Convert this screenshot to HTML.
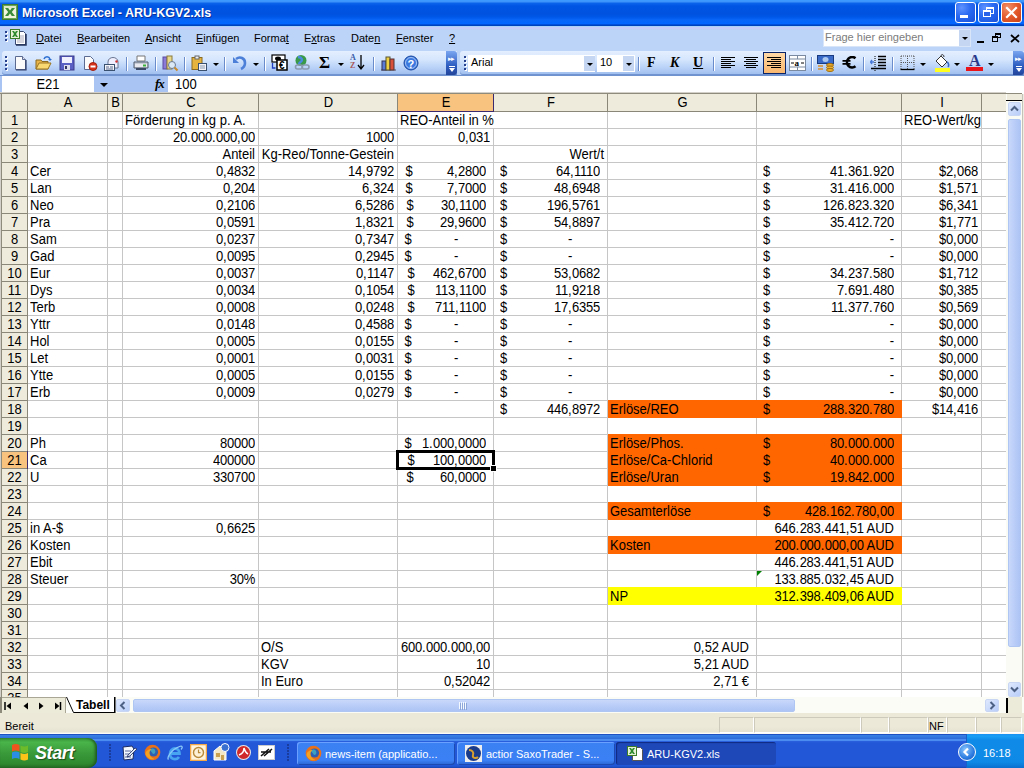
<!DOCTYPE html><html><head><meta charset="utf-8"><style>
*{margin:0;padding:0;box-sizing:border-box}
html,body{width:1024px;height:768px;overflow:hidden;background:#fff;font-family:"Liberation Sans", sans-serif}
.a{position:absolute}
.t{position:absolute;font-size:13px;line-height:17px;height:17px;white-space:nowrap;color:#000;transform-origin:0 13px;transform:scaleY(1.08)}
.n{letter-spacing:-0.23px}
.n i{font-style:normal;letter-spacing:0.39px}
.n em{font-style:normal;letter-spacing:0}
.r{text-align:right}
.c{text-align:center}
.hl{position:absolute;height:1px;background:#c6c6c6}
.vl{position:absolute;width:1px;background:#c6c6c6}
.m{position:absolute;font-size:11px;line-height:13px;white-space:nowrap;color:#000}
</style></head><body>
<div class="a" style="left:0;top:92px;width:1024px;height:605px;background:#fff"></div>
<div class="hl" style="left:28px;top:128px;width:978px"></div>
<div class="hl" style="left:28px;top:145px;width:978px"></div>
<div class="hl" style="left:28px;top:162px;width:978px"></div>
<div class="hl" style="left:28px;top:179px;width:978px"></div>
<div class="hl" style="left:28px;top:196px;width:978px"></div>
<div class="hl" style="left:28px;top:213px;width:978px"></div>
<div class="hl" style="left:28px;top:230px;width:978px"></div>
<div class="hl" style="left:28px;top:247px;width:978px"></div>
<div class="hl" style="left:28px;top:264px;width:978px"></div>
<div class="hl" style="left:28px;top:281px;width:978px"></div>
<div class="hl" style="left:28px;top:298px;width:978px"></div>
<div class="hl" style="left:28px;top:315px;width:978px"></div>
<div class="hl" style="left:28px;top:332px;width:978px"></div>
<div class="hl" style="left:28px;top:349px;width:978px"></div>
<div class="hl" style="left:28px;top:366px;width:978px"></div>
<div class="hl" style="left:28px;top:383px;width:978px"></div>
<div class="hl" style="left:28px;top:400px;width:978px"></div>
<div class="hl" style="left:28px;top:417px;width:978px"></div>
<div class="hl" style="left:28px;top:434px;width:978px"></div>
<div class="hl" style="left:28px;top:451px;width:978px"></div>
<div class="hl" style="left:28px;top:468px;width:978px"></div>
<div class="hl" style="left:28px;top:485px;width:978px"></div>
<div class="hl" style="left:28px;top:502px;width:978px"></div>
<div class="hl" style="left:28px;top:519px;width:978px"></div>
<div class="hl" style="left:28px;top:536px;width:978px"></div>
<div class="hl" style="left:28px;top:553px;width:978px"></div>
<div class="hl" style="left:28px;top:570px;width:978px"></div>
<div class="hl" style="left:28px;top:587px;width:978px"></div>
<div class="hl" style="left:28px;top:604px;width:978px"></div>
<div class="hl" style="left:28px;top:621px;width:978px"></div>
<div class="hl" style="left:28px;top:638px;width:978px"></div>
<div class="hl" style="left:28px;top:655px;width:978px"></div>
<div class="hl" style="left:28px;top:672px;width:978px"></div>
<div class="hl" style="left:28px;top:689px;width:978px"></div>
<div class="vl" style="left:107px;top:112px;height:585px"></div>
<div class="vl" style="left:122px;top:112px;height:585px"></div>
<div class="vl" style="left:258px;top:112px;height:585px"></div>
<div class="vl" style="left:397px;top:112px;height:585px"></div>
<div class="vl" style="left:493px;top:112px;height:585px"></div>
<div class="vl" style="left:607px;top:112px;height:585px"></div>
<div class="vl" style="left:756px;top:112px;height:585px"></div>
<div class="vl" style="left:901px;top:112px;height:585px"></div>
<div class="vl" style="left:981px;top:112px;height:585px"></div>
<div class="a" style="left:608px;top:400px;width:294px;height:18px;background:#ff6600"></div>
<div class="a" style="left:608px;top:434px;width:294px;height:52px;background:#ff6600"></div>
<div class="a" style="left:608px;top:502px;width:294px;height:18px;background:#ff6600"></div>
<div class="a" style="left:608px;top:536px;width:294px;height:18px;background:#ff6600"></div>
<div class="a" style="left:608px;top:587px;width:294px;height:18px;background:#ffff00"></div>
<div class="a" style="left:493px;top:112px;width:1px;height:16px;background:#fff"></div>
<div class="t" style="left:125px;top:112px">Förderung in kg p. A.</div>
<div class="t" style="left:400px;top:112px">REO-Anteil in %</div>
<div class="t" style="left:904px;top:112px">REO-Wert/kg</div>
<div class="t r" style="left:-45px;width:300px;top:129px"><span class="n">20<i>.</i>000<i>.</i>000<i>,</i>00</span></div>
<div class="t r" style="left:94px;width:300px;top:129px"><span class="n">1000</span></div>
<div class="t r" style="left:190px;width:300px;top:129px"><span class="n">0<i>,</i>031</span></div>
<div class="t r" style="left:-45px;width:300px;top:146px">Anteil</div>
<div class="t r" style="left:94px;width:300px;top:146px">Kg-Reo/Tonne-Gestein</div>
<div class="t r" style="left:304px;width:300px;top:146px">Wert/t</div>
<div class="t" style="left:30px;top:163px">Cer</div>
<div class="t r" style="left:-45px;width:300px;top:163px"><span class="n">0<i>,</i>4832</span></div>
<div class="t r" style="left:94px;width:300px;top:163px"><span class="n">14<i>,</i>9792</span></div>
<div class="t" style="left:405.5px;top:163px">$</div>
<div class="t r" style="left:186px;width:300px;top:163px"><span class="n">4<i>,</i>2800</span></div>
<div class="t" style="left:500px;top:163px">$</div>
<div class="t r" style="left:300px;width:300px;top:163px"><span class="n">64<i>,</i>1110</span></div>
<div class="t" style="left:763px;top:163px">$</div>
<div class="t r" style="left:594px;width:300px;top:163px"><span class="n">41<i>.</i>361<i>.</i>920</span></div>
<div class="t r" style="left:678px;width:300px;top:163px"><span class="n">$2<i>,</i>068</span></div>
<div class="t" style="left:30px;top:180px">Lan</div>
<div class="t r" style="left:-45px;width:300px;top:180px"><span class="n">0<i>,</i>204</span></div>
<div class="t r" style="left:94px;width:300px;top:180px"><span class="n">6<i>,</i>324</span></div>
<div class="t" style="left:405.5px;top:180px">$</div>
<div class="t r" style="left:186px;width:300px;top:180px"><span class="n">7<i>,</i>7000</span></div>
<div class="t" style="left:500px;top:180px">$</div>
<div class="t r" style="left:300px;width:300px;top:180px"><span class="n">48<i>,</i>6948</span></div>
<div class="t" style="left:763px;top:180px">$</div>
<div class="t r" style="left:594px;width:300px;top:180px"><span class="n">31<i>.</i>416<i>.</i>000</span></div>
<div class="t r" style="left:678px;width:300px;top:180px"><span class="n">$1<i>,</i>571</span></div>
<div class="t" style="left:30px;top:197px">Neo</div>
<div class="t r" style="left:-45px;width:300px;top:197px"><span class="n">0<i>,</i>2106</span></div>
<div class="t r" style="left:94px;width:300px;top:197px"><span class="n">6<i>,</i>5286</span></div>
<div class="t" style="left:406.5px;top:197px">$</div>
<div class="t r" style="left:186px;width:300px;top:197px"><span class="n">30<i>,</i>1100</span></div>
<div class="t" style="left:500px;top:197px">$</div>
<div class="t r" style="left:300px;width:300px;top:197px"><span class="n">196<i>,</i>5761</span></div>
<div class="t" style="left:763px;top:197px">$</div>
<div class="t r" style="left:594px;width:300px;top:197px"><span class="n">126<i>.</i>823<i>.</i>320</span></div>
<div class="t r" style="left:678px;width:300px;top:197px"><span class="n">$6<i>,</i>341</span></div>
<div class="t" style="left:30px;top:214px">Pra</div>
<div class="t r" style="left:-45px;width:300px;top:214px"><span class="n">0<i>,</i>0591</span></div>
<div class="t r" style="left:94px;width:300px;top:214px"><span class="n">1<i>,</i>8321</span></div>
<div class="t" style="left:406.5px;top:214px">$</div>
<div class="t r" style="left:186px;width:300px;top:214px"><span class="n">29<i>,</i>9600</span></div>
<div class="t" style="left:500px;top:214px">$</div>
<div class="t r" style="left:300px;width:300px;top:214px"><span class="n">54<i>,</i>8897</span></div>
<div class="t" style="left:763px;top:214px">$</div>
<div class="t r" style="left:594px;width:300px;top:214px"><span class="n">35<i>.</i>412<i>.</i>720</span></div>
<div class="t r" style="left:678px;width:300px;top:214px"><span class="n">$1<i>,</i>771</span></div>
<div class="t" style="left:30px;top:231px">Sam</div>
<div class="t r" style="left:-45px;width:300px;top:231px"><span class="n">0<i>,</i>0237</span></div>
<div class="t r" style="left:94px;width:300px;top:231px"><span class="n">0<i>,</i>7347</span></div>
<div class="t" style="left:404.5px;top:231px">$</div>
<div class="t" style="left:454px;top:231px">-</div>
<div class="t" style="left:500px;top:231px">$</div>
<div class="t" style="left:568px;top:231px">-</div>
<div class="t" style="left:763px;top:231px">$</div>
<div class="t r" style="left:594px;width:300px;top:231px">-</div>
<div class="t r" style="left:678px;width:300px;top:231px"><span class="n">$0<i>,</i>000</span></div>
<div class="t" style="left:30px;top:248px">Gad</div>
<div class="t r" style="left:-45px;width:300px;top:248px"><span class="n">0<i>,</i>0095</span></div>
<div class="t r" style="left:94px;width:300px;top:248px"><span class="n">0<i>,</i>2945</span></div>
<div class="t" style="left:404.5px;top:248px">$</div>
<div class="t" style="left:454px;top:248px">-</div>
<div class="t" style="left:500px;top:248px">$</div>
<div class="t" style="left:568px;top:248px">-</div>
<div class="t" style="left:763px;top:248px">$</div>
<div class="t r" style="left:594px;width:300px;top:248px">-</div>
<div class="t r" style="left:678px;width:300px;top:248px"><span class="n">$0<i>,</i>000</span></div>
<div class="t" style="left:30px;top:265px">Eur</div>
<div class="t r" style="left:-45px;width:300px;top:265px"><span class="n">0<i>,</i>0037</span></div>
<div class="t r" style="left:94px;width:300px;top:265px"><span class="n">0<i>,</i>1147</span></div>
<div class="t" style="left:407.5px;top:265px">$</div>
<div class="t r" style="left:186px;width:300px;top:265px"><span class="n">462<i>,</i>6700</span></div>
<div class="t" style="left:500px;top:265px">$</div>
<div class="t r" style="left:300px;width:300px;top:265px"><span class="n">53<i>,</i>0682</span></div>
<div class="t" style="left:763px;top:265px">$</div>
<div class="t r" style="left:594px;width:300px;top:265px"><span class="n">34<i>.</i>237<i>.</i>580</span></div>
<div class="t r" style="left:678px;width:300px;top:265px"><span class="n">$1<i>,</i>712</span></div>
<div class="t" style="left:30px;top:282px">Dys</div>
<div class="t r" style="left:-45px;width:300px;top:282px"><span class="n">0<i>,</i>0034</span></div>
<div class="t r" style="left:94px;width:300px;top:282px"><span class="n">0<i>,</i>1054</span></div>
<div class="t" style="left:407.5px;top:282px">$</div>
<div class="t r" style="left:186px;width:300px;top:282px"><span class="n">113<i>,</i>1100</span></div>
<div class="t" style="left:500px;top:282px">$</div>
<div class="t r" style="left:300px;width:300px;top:282px"><span class="n">11<i>,</i>9218</span></div>
<div class="t" style="left:763px;top:282px">$</div>
<div class="t r" style="left:594px;width:300px;top:282px"><span class="n">7<i>.</i>691<i>.</i>480</span></div>
<div class="t r" style="left:678px;width:300px;top:282px"><span class="n">$0<i>,</i>385</span></div>
<div class="t" style="left:30px;top:299px">Terb</div>
<div class="t r" style="left:-45px;width:300px;top:299px"><span class="n">0<i>,</i>0008</span></div>
<div class="t r" style="left:94px;width:300px;top:299px"><span class="n">0<i>,</i>0248</span></div>
<div class="t" style="left:407.5px;top:299px">$</div>
<div class="t r" style="left:186px;width:300px;top:299px"><span class="n">711<i>,</i>1100</span></div>
<div class="t" style="left:500px;top:299px">$</div>
<div class="t r" style="left:300px;width:300px;top:299px"><span class="n">17<i>,</i>6355</span></div>
<div class="t" style="left:763px;top:299px">$</div>
<div class="t r" style="left:594px;width:300px;top:299px"><span class="n">11<i>.</i>377<i>.</i>760</span></div>
<div class="t r" style="left:678px;width:300px;top:299px"><span class="n">$0<i>,</i>569</span></div>
<div class="t" style="left:30px;top:316px">Yttr</div>
<div class="t r" style="left:-45px;width:300px;top:316px"><span class="n">0<i>,</i>0148</span></div>
<div class="t r" style="left:94px;width:300px;top:316px"><span class="n">0<i>,</i>4588</span></div>
<div class="t" style="left:404.5px;top:316px">$</div>
<div class="t" style="left:454px;top:316px">-</div>
<div class="t" style="left:500px;top:316px">$</div>
<div class="t" style="left:568px;top:316px">-</div>
<div class="t" style="left:763px;top:316px">$</div>
<div class="t r" style="left:594px;width:300px;top:316px">-</div>
<div class="t r" style="left:678px;width:300px;top:316px"><span class="n">$0<i>,</i>000</span></div>
<div class="t" style="left:30px;top:333px">Hol</div>
<div class="t r" style="left:-45px;width:300px;top:333px"><span class="n">0<i>,</i>0005</span></div>
<div class="t r" style="left:94px;width:300px;top:333px"><span class="n">0<i>,</i>0155</span></div>
<div class="t" style="left:404.5px;top:333px">$</div>
<div class="t" style="left:454px;top:333px">-</div>
<div class="t" style="left:500px;top:333px">$</div>
<div class="t" style="left:568px;top:333px">-</div>
<div class="t" style="left:763px;top:333px">$</div>
<div class="t r" style="left:594px;width:300px;top:333px">-</div>
<div class="t r" style="left:678px;width:300px;top:333px"><span class="n">$0<i>,</i>000</span></div>
<div class="t" style="left:30px;top:350px">Let</div>
<div class="t r" style="left:-45px;width:300px;top:350px"><span class="n">0<i>,</i>0001</span></div>
<div class="t r" style="left:94px;width:300px;top:350px"><span class="n">0<i>,</i>0031</span></div>
<div class="t" style="left:404.5px;top:350px">$</div>
<div class="t" style="left:454px;top:350px">-</div>
<div class="t" style="left:500px;top:350px">$</div>
<div class="t" style="left:568px;top:350px">-</div>
<div class="t" style="left:763px;top:350px">$</div>
<div class="t r" style="left:594px;width:300px;top:350px">-</div>
<div class="t r" style="left:678px;width:300px;top:350px"><span class="n">$0<i>,</i>000</span></div>
<div class="t" style="left:30px;top:367px">Ytte</div>
<div class="t r" style="left:-45px;width:300px;top:367px"><span class="n">0<i>,</i>0005</span></div>
<div class="t r" style="left:94px;width:300px;top:367px"><span class="n">0<i>,</i>0155</span></div>
<div class="t" style="left:404.5px;top:367px">$</div>
<div class="t" style="left:454px;top:367px">-</div>
<div class="t" style="left:500px;top:367px">$</div>
<div class="t" style="left:568px;top:367px">-</div>
<div class="t" style="left:763px;top:367px">$</div>
<div class="t r" style="left:594px;width:300px;top:367px">-</div>
<div class="t r" style="left:678px;width:300px;top:367px"><span class="n">$0<i>,</i>000</span></div>
<div class="t" style="left:30px;top:384px">Erb</div>
<div class="t r" style="left:-45px;width:300px;top:384px"><span class="n">0<i>,</i>0009</span></div>
<div class="t r" style="left:94px;width:300px;top:384px"><span class="n">0<i>,</i>0279</span></div>
<div class="t" style="left:404.5px;top:384px">$</div>
<div class="t" style="left:454px;top:384px">-</div>
<div class="t" style="left:500px;top:384px">$</div>
<div class="t" style="left:568px;top:384px">-</div>
<div class="t" style="left:763px;top:384px">$</div>
<div class="t r" style="left:594px;width:300px;top:384px">-</div>
<div class="t r" style="left:678px;width:300px;top:384px"><span class="n">$0<i>,</i>000</span></div>
<div class="t" style="left:500px;top:401px">$</div>
<div class="t r" style="left:300px;width:300px;top:401px"><span class="n">446<i>,</i>8972</span></div>
<div class="t" style="left:610px;top:401px">Erlöse/REO</div>
<div class="t" style="left:763px;top:401px">$</div>
<div class="t r" style="left:594px;width:300px;top:401px"><span class="n">288<i>.</i>320<i>.</i>780</span></div>
<div class="t r" style="left:678px;width:300px;top:401px"><span class="n">$14<i>,</i>416</span></div>
<div class="t" style="left:30px;top:435px">Ph</div>
<div class="t r" style="left:-45px;width:300px;top:435px"><span class="n">80000</span></div>
<div class="t" style="left:404.5px;top:435px">$</div>
<div class="t r" style="left:186px;width:300px;top:435px"><span class="n">1<i>.</i>000<i>,</i>0000</span></div>
<div class="t" style="left:610px;top:435px">Erlöse/Phos.</div>
<div class="t" style="left:763px;top:435px">$</div>
<div class="t r" style="left:594px;width:300px;top:435px"><span class="n">80<i>.</i>000<i>.</i>000</span></div>
<div class="t" style="left:30px;top:452px">Ca</div>
<div class="t r" style="left:-45px;width:300px;top:452px"><span class="n">400000</span></div>
<div class="t" style="left:407.5px;top:452px">$</div>
<div class="t r" style="left:186px;width:300px;top:452px"><span class="n">100<i>,</i>0000</span></div>
<div class="t" style="left:610px;top:452px">Erlöse/Ca-Chlorid</div>
<div class="t" style="left:763px;top:452px">$</div>
<div class="t r" style="left:594px;width:300px;top:452px"><span class="n">40<i>.</i>000<i>.</i>000</span></div>
<div class="t" style="left:30px;top:469px">U</div>
<div class="t r" style="left:-45px;width:300px;top:469px"><span class="n">330700</span></div>
<div class="t" style="left:406.5px;top:469px">$</div>
<div class="t r" style="left:186px;width:300px;top:469px"><span class="n">60<i>,</i>0000</span></div>
<div class="t" style="left:610px;top:469px">Erlöse/Uran</div>
<div class="t" style="left:763px;top:469px">$</div>
<div class="t r" style="left:594px;width:300px;top:469px"><span class="n">19<i>.</i>842<i>.</i>000</span></div>
<div class="t" style="left:610px;top:503px">Gesamterlöse</div>
<div class="t" style="left:763px;top:503px">$</div>
<div class="t r" style="left:594px;width:300px;top:503px"><span class="n">428<i>.</i>162<i>.</i>780<i>,</i>00</span></div>
<div class="t" style="left:30px;top:520px">in A-$</div>
<div class="t r" style="left:-45px;width:300px;top:520px"><span class="n">0<i>,</i>6625</span></div>
<div class="t r" style="left:594px;width:300px;top:520px"><span class="n">646<i>.</i>283<i>.</i>441<i>,</i>51<em> AUD</em></span></div>
<div class="t" style="left:30px;top:537px">Kosten</div>
<div class="t" style="left:610px;top:537px">Kosten</div>
<div class="t r" style="left:594px;width:300px;top:537px"><span class="n">200<i>.</i>000<i>.</i>000<i>,</i>00<em> AUD</em></span></div>
<div class="t" style="left:30px;top:554px">Ebit</div>
<div class="t r" style="left:594px;width:300px;top:554px"><span class="n">446<i>.</i>283<i>.</i>441<i>,</i>51<em> AUD</em></span></div>
<div class="t" style="left:30px;top:571px">Steuer</div>
<div class="t r" style="left:-45px;width:300px;top:571px"><span class="n">30%</span></div>
<div class="t r" style="left:594px;width:300px;top:571px"><span class="n">133<i>.</i>885<i>.</i>032<i>,</i>45<em> AUD</em></span></div>
<div class="t" style="left:610px;top:588px">NP</div>
<div class="t r" style="left:594px;width:300px;top:588px"><span class="n">312<i>.</i>398<i>.</i>409<i>,</i>06<em> AUD</em></span></div>
<div class="t" style="left:261px;top:639px">O/S</div>
<div class="t r" style="left:190px;width:300px;top:639px"><span class="n">600<i>.</i>000<i>.</i>000<i>,</i>00</span></div>
<div class="t r" style="left:449px;width:300px;top:639px"><span class="n">0<i>,</i>52<em> AUD</em></span></div>
<div class="t" style="left:261px;top:656px">KGV</div>
<div class="t r" style="left:190px;width:300px;top:656px"><span class="n">10</span></div>
<div class="t r" style="left:449px;width:300px;top:656px"><span class="n">5<i>,</i>21<em> AUD</em></span></div>
<div class="t" style="left:261px;top:673px">In Euro</div>
<div class="t r" style="left:190px;width:300px;top:673px"><span class="n">0<i>,</i>52042</span></div>
<div class="t r" style="left:449px;width:300px;top:673px"><span class="n">2<i>,</i>71<em> €</em></span></div>
<svg class="a" style="left:757px;top:571px" width="6" height="6"><path d="M0 0H5L0 5Z" fill="#008000"/></svg>
<div class="a" style="left:396px;top:450px;width:99px;height:20px;border:3px solid #000"></div>
<div class="a" style="left:490px;top:465px;width:7px;height:7px;background:#000;border:1px solid #fff"></div>
<div class="a" style="left:0;top:92px;width:1006px;height:1px;background:#d2d0c8"></div>
<div class="a" style="left:0;top:93px;width:1006px;height:1px;background:#8e8b7c"></div>
<div class="a" style="left:1px;top:94px;width:1005px;height:17px;background:#eeebdd"></div>
<div class="a" style="left:1px;top:111px;width:1005px;height:1px;background:#8a8778"></div>
<div class="a" style="left:0;top:94px;width:1px;height:603px;background:#d2d0c8"></div>
<div class="a" style="left:1px;top:94px;width:1px;height:603px;background:#8e8b7c"></div>
<div class="a" style="left:2px;top:112px;width:25px;height:585px;background:#eeebdd"></div>
<div class="a" style="left:27px;top:94px;width:1px;height:603px;background:#8a8778"></div>
<div class="a" style="left:28px;top:94px;width:79px;height:17px;background:#eeebdd"></div>
<div class="a" style="left:107px;top:94px;width:1px;height:17px;background:#8a8778"></div>
<div class="t c" style="left:28px;width:80px;top:94px">A</div>
<div class="a" style="left:108px;top:94px;width:14px;height:17px;background:#eeebdd"></div>
<div class="a" style="left:122px;top:94px;width:1px;height:17px;background:#8a8778"></div>
<div class="t c" style="left:108px;width:15px;top:94px">B</div>
<div class="a" style="left:123px;top:94px;width:135px;height:17px;background:#eeebdd"></div>
<div class="a" style="left:258px;top:94px;width:1px;height:17px;background:#8a8778"></div>
<div class="t c" style="left:123px;width:136px;top:94px">C</div>
<div class="a" style="left:259px;top:94px;width:138px;height:17px;background:#eeebdd"></div>
<div class="a" style="left:397px;top:94px;width:1px;height:17px;background:#8a8778"></div>
<div class="t c" style="left:259px;width:139px;top:94px">D</div>
<div class="a" style="left:398px;top:94px;width:95px;height:17px;background:#f8c37e"></div>
<div class="a" style="left:493px;top:94px;width:1px;height:17px;background:#8a8778"></div>
<div class="t c" style="left:398px;width:96px;top:94px">E</div>
<div class="a" style="left:494px;top:94px;width:113px;height:17px;background:#eeebdd"></div>
<div class="a" style="left:607px;top:94px;width:1px;height:17px;background:#8a8778"></div>
<div class="t c" style="left:494px;width:114px;top:94px">F</div>
<div class="a" style="left:608px;top:94px;width:148px;height:17px;background:#eeebdd"></div>
<div class="a" style="left:756px;top:94px;width:1px;height:17px;background:#8a8778"></div>
<div class="t c" style="left:608px;width:149px;top:94px">G</div>
<div class="a" style="left:757px;top:94px;width:144px;height:17px;background:#eeebdd"></div>
<div class="a" style="left:901px;top:94px;width:1px;height:17px;background:#8a8778"></div>
<div class="t c" style="left:757px;width:145px;top:94px">H</div>
<div class="a" style="left:902px;top:94px;width:79px;height:17px;background:#eeebdd"></div>
<div class="a" style="left:981px;top:94px;width:1px;height:17px;background:#8a8778"></div>
<div class="t c" style="left:902px;width:80px;top:94px">I</div>
<div class="a" style="left:982px;top:94px;width:24px;height:17px;background:#eeebdd"></div>
<div class="a" style="left:397px;top:111px;width:97px;height:1px;background:#3c2a6e"></div>
<div class="a" style="left:493px;top:94px;width:1px;height:17px;background:#3c2a6e"></div>
<div class="a" style="left:2px;top:128px;width:25px;height:1px;background:#8a8778"></div>
<div class="t c" style="left:2px;width:25px;top:112px">1</div>
<div class="a" style="left:2px;top:145px;width:25px;height:1px;background:#8a8778"></div>
<div class="t c" style="left:2px;width:25px;top:129px">2</div>
<div class="a" style="left:2px;top:162px;width:25px;height:1px;background:#8a8778"></div>
<div class="t c" style="left:2px;width:25px;top:146px">3</div>
<div class="a" style="left:2px;top:179px;width:25px;height:1px;background:#8a8778"></div>
<div class="t c" style="left:2px;width:25px;top:163px">4</div>
<div class="a" style="left:2px;top:196px;width:25px;height:1px;background:#8a8778"></div>
<div class="t c" style="left:2px;width:25px;top:180px">5</div>
<div class="a" style="left:2px;top:213px;width:25px;height:1px;background:#8a8778"></div>
<div class="t c" style="left:2px;width:25px;top:197px">6</div>
<div class="a" style="left:2px;top:230px;width:25px;height:1px;background:#8a8778"></div>
<div class="t c" style="left:2px;width:25px;top:214px">7</div>
<div class="a" style="left:2px;top:247px;width:25px;height:1px;background:#8a8778"></div>
<div class="t c" style="left:2px;width:25px;top:231px">8</div>
<div class="a" style="left:2px;top:264px;width:25px;height:1px;background:#8a8778"></div>
<div class="t c" style="left:2px;width:25px;top:248px">9</div>
<div class="a" style="left:2px;top:281px;width:25px;height:1px;background:#8a8778"></div>
<div class="t c" style="left:2px;width:25px;top:265px">10</div>
<div class="a" style="left:2px;top:298px;width:25px;height:1px;background:#8a8778"></div>
<div class="t c" style="left:2px;width:25px;top:282px">11</div>
<div class="a" style="left:2px;top:315px;width:25px;height:1px;background:#8a8778"></div>
<div class="t c" style="left:2px;width:25px;top:299px">12</div>
<div class="a" style="left:2px;top:332px;width:25px;height:1px;background:#8a8778"></div>
<div class="t c" style="left:2px;width:25px;top:316px">13</div>
<div class="a" style="left:2px;top:349px;width:25px;height:1px;background:#8a8778"></div>
<div class="t c" style="left:2px;width:25px;top:333px">14</div>
<div class="a" style="left:2px;top:366px;width:25px;height:1px;background:#8a8778"></div>
<div class="t c" style="left:2px;width:25px;top:350px">15</div>
<div class="a" style="left:2px;top:383px;width:25px;height:1px;background:#8a8778"></div>
<div class="t c" style="left:2px;width:25px;top:367px">16</div>
<div class="a" style="left:2px;top:400px;width:25px;height:1px;background:#8a8778"></div>
<div class="t c" style="left:2px;width:25px;top:384px">17</div>
<div class="a" style="left:2px;top:417px;width:25px;height:1px;background:#8a8778"></div>
<div class="t c" style="left:2px;width:25px;top:401px">18</div>
<div class="a" style="left:2px;top:434px;width:25px;height:1px;background:#8a8778"></div>
<div class="t c" style="left:2px;width:25px;top:418px">19</div>
<div class="a" style="left:2px;top:451px;width:25px;height:1px;background:#8a8778"></div>
<div class="t c" style="left:2px;width:25px;top:435px">20</div>
<div class="a" style="left:2px;top:452px;width:25px;height:16px;background:#f8c37e"></div>
<div class="a" style="left:27px;top:451px;width:1px;height:18px;background:#3c2a6e"></div>
<div class="a" style="left:2px;top:468px;width:25px;height:1px;background:#8a8778"></div>
<div class="t c" style="left:2px;width:25px;top:452px">21</div>
<div class="a" style="left:2px;top:485px;width:25px;height:1px;background:#8a8778"></div>
<div class="t c" style="left:2px;width:25px;top:469px">22</div>
<div class="a" style="left:2px;top:502px;width:25px;height:1px;background:#8a8778"></div>
<div class="t c" style="left:2px;width:25px;top:486px">23</div>
<div class="a" style="left:2px;top:519px;width:25px;height:1px;background:#8a8778"></div>
<div class="t c" style="left:2px;width:25px;top:503px">24</div>
<div class="a" style="left:2px;top:536px;width:25px;height:1px;background:#8a8778"></div>
<div class="t c" style="left:2px;width:25px;top:520px">25</div>
<div class="a" style="left:2px;top:553px;width:25px;height:1px;background:#8a8778"></div>
<div class="t c" style="left:2px;width:25px;top:537px">26</div>
<div class="a" style="left:2px;top:570px;width:25px;height:1px;background:#8a8778"></div>
<div class="t c" style="left:2px;width:25px;top:554px">27</div>
<div class="a" style="left:2px;top:587px;width:25px;height:1px;background:#8a8778"></div>
<div class="t c" style="left:2px;width:25px;top:571px">28</div>
<div class="a" style="left:2px;top:604px;width:25px;height:1px;background:#8a8778"></div>
<div class="t c" style="left:2px;width:25px;top:588px">29</div>
<div class="a" style="left:2px;top:621px;width:25px;height:1px;background:#8a8778"></div>
<div class="t c" style="left:2px;width:25px;top:605px">30</div>
<div class="a" style="left:2px;top:638px;width:25px;height:1px;background:#8a8778"></div>
<div class="t c" style="left:2px;width:25px;top:622px">31</div>
<div class="a" style="left:2px;top:655px;width:25px;height:1px;background:#8a8778"></div>
<div class="t c" style="left:2px;width:25px;top:639px">32</div>
<div class="a" style="left:2px;top:672px;width:25px;height:1px;background:#8a8778"></div>
<div class="t c" style="left:2px;width:25px;top:656px">33</div>
<div class="a" style="left:2px;top:689px;width:25px;height:1px;background:#8a8778"></div>
<div class="t c" style="left:2px;width:25px;top:673px">34</div>
<div class="t c" style="left:2px;width:25px;top:690px">35</div>
<!-- ===== title bar ===== -->
<div class="a" style="left:0;top:0;width:1024px;height:26px;background:linear-gradient(#3d9bff 0px,#3d95fb 1.5px,#0b62ea 3.5px,#0055e3 6px,#0052df 14px,#0058e8 17px,#0866f8 20px,#0466ff 23.5px,#0050dc 24.5px,#003aae 26px)"></div>
<svg class="a" style="left:2px;top:4px" width="16" height="16" viewBox="0 0 16 16">
 <rect x="0.5" y="0.5" width="15" height="15" fill="#6aa858" stroke="#3f7a35"/>
 <rect x="2" y="2" width="12" height="12" fill="#f2f4dc"/>
 <rect x="2" y="2" width="12" height="2" fill="#dfe8c8"/>
 <path d="M3 4h3.2l1.8 2.4 1.8-2.4H13L9.8 8 13 12H9.8L8 9.6 6.2 12H3l3.2-4z" fill="#3c8c3a"/>
</svg>
<div class="a" style="left:22px;top:5px;font-size:12.5px;font-weight:bold;color:#fff;line-height:16px;text-shadow:1px 1px 0 #0a2f9c">Microsoft Excel - ARU-KGV2.xls</div>
<!-- title buttons -->
<div class="a" style="left:955px;top:2px;width:21px;height:21px;border:1px solid #fff;border-radius:3px;background:radial-gradient(circle at 30% 25%,#5f93ff 0%,#2a6af2 45%,#1b50d8 100%)"></div>
<div class="a" style="left:960px;top:15px;width:8px;height:3px;background:#fff"></div>
<div class="a" style="left:978px;top:2px;width:21px;height:21px;border:1px solid #fff;border-radius:3px;background:radial-gradient(circle at 30% 25%,#5f93ff 0%,#2a6af2 45%,#1b50d8 100%)"></div>
<div class="a" style="left:986px;top:7px;width:8px;height:7px;border:1px solid #fff;border-top-width:2px"></div>
<div class="a" style="left:983px;top:10px;width:8px;height:7px;border:1px solid #fff;border-top-width:2px;background:#2a62ea"></div>
<div class="a" style="left:1001px;top:2px;width:21px;height:21px;border:1px solid #fff;border-radius:3px;background:radial-gradient(circle at 30% 25%,#f0906a 0%,#e35a2c 50%,#c8401a 100%)"></div>
<svg class="a" style="left:1001px;top:2px" width="21" height="21"><path d="M6 6L15 15M15 6L6 15" stroke="#fff" stroke-width="2.2" stroke-linecap="square"/></svg>

<!-- ===== menu bar ===== -->
<div class="a" style="left:0;top:26px;width:1024px;height:50px;background:#bcd4f8"></div>
<div class="a" style="left:0;top:26px;width:1024px;height:4px;background:linear-gradient(#acd2f8 0px,#acd2f8 1px,#c6cdf9 1px,#c6cdf9 3px,#b4d6f2 4px)"></div>
<!-- grip -->
<div class="a" style="left:5px;top:31px;width:2px;height:2px;background:#27418f;box-shadow:0 4px 0 #27418f,0 8px 0 #27418f,1px 1px 0 #fff,1px 5px 0 #fff,1px 9px 0 #fff"></div>
<!-- excel doc icon -->
<svg class="a" style="left:10px;top:29px" width="18" height="17" viewBox="0 0 18 17">
 <path d="M5.5 2.5h8l2 2v11h-10z" fill="#fff" stroke="#3a4c74"/>
 <path d="M7 7h7M7 9h7M7 11h7M7 13h7" stroke="#aab" stroke-width="1"/>
 <rect x="0.5" y="0.5" width="9" height="9" fill="#e8f2d8" stroke="#3d7d2a"/>
 <path d="M2 2h2l1 1.5 1-1.5h2l-2 3 2 3h-2l-1-1.5-1 1.5h-2l2-3z" fill="#2f8a2f"/>
 <path d="M6 16h10v-11" stroke="#25335a" stroke-width="1.5" fill="none"/>
</svg>
<div class="m" style="left:36px;top:32px"><u>D</u>atei</div>
<div class="m" style="left:77px;top:32px"><u>B</u>earbeiten</div>
<div class="m" style="left:145px;top:32px"><u>A</u>nsicht</div>
<div class="m" style="left:196px;top:32px"><u>E</u>infügen</div>
<div class="m" style="left:254px;top:32px">Forma<u>t</u></div>
<div class="m" style="left:304px;top:32px">E<u>x</u>tras</div>
<div class="m" style="left:351px;top:32px">Date<u>n</u></div>
<div class="m" style="left:396px;top:32px"><u>F</u>enster</div>
<div class="m" style="left:449px;top:32px"><u>?</u></div>
<!-- help box -->
<div class="a" style="left:823px;top:29px;width:148px;height:18px;background:#fff;border:1px solid #d8e5f8"></div>
<div class="a" style="left:959px;top:30px;width:11px;height:16px;background:#c5d6f3"></div>
<div class="a" style="left:962px;top:37px;width:0;height:0;border-left:3px solid transparent;border-right:3px solid transparent;border-top:3px solid #000"></div>
<div class="m" style="left:825px;top:31px;color:#7c7c7c">Frage hier eingeben</div>
<div class="a" style="left:977px;top:41px;width:7px;height:2px;background:#000"></div>
<div class="a" style="left:995px;top:33px;width:6px;height:5px;border:1px solid #000;border-top-width:2px"></div>
<div class="a" style="left:992px;top:36px;width:6px;height:6px;border:1px solid #000;border-top-width:2px;background:#c6d9f7"></div>
<svg class="a" style="left:1010px;top:34px" width="10" height="9"><path d="M1 1L9 8M9 1L1 8" stroke="#000" stroke-width="1.8"/></svg>

<!-- ===== toolbars ===== -->
<div class="a" style="left:2px;top:51px;width:455px;height:24px;border-radius:3px 0 0 3px;background:linear-gradient(#e4efff 0%,#d6e6fd 35%,#bcd4f8 65%,#9ebdee 100%);box-shadow:inset 0 -1px 0 #7193cf"></div>
<div class="a" style="left:446px;top:51px;width:11px;height:24px;border-radius:0 3px 3px 0;background:linear-gradient(#7aa6f0,#2f5fc2 60%,#23449a)"></div>
<div class="a" style="left:448px;top:55px;font-size:7px;line-height:7px;color:#fff;letter-spacing:-1px">▸▸</div>
<div class="a" style="left:449px;top:66px;width:6px;height:1px;background:#fff"></div>
<div class="a" style="left:449px;top:68px;width:0;height:0;border-left:3px solid transparent;border-right:3px solid transparent;border-top:4px solid #fff"></div>
<div class="a" style="left:460px;top:51px;width:564px;height:24px;border-radius:3px 0 0 3px;background:linear-gradient(#e4efff 0%,#d6e6fd 35%,#bcd4f8 65%,#9ebdee 100%);box-shadow:inset 0 -1px 0 #7193cf"></div>
<div class="a" style="left:1013px;top:51px;width:11px;height:24px;border-radius:0 3px 3px 0;background:linear-gradient(#7aa6f0,#2f5fc2 60%,#23449a)"></div>
<div class="a" style="left:1015px;top:55px;font-size:7px;line-height:7px;color:#fff;letter-spacing:-1px">▸▸</div>
<div class="a" style="left:1016px;top:66px;width:6px;height:1px;background:#fff"></div>
<div class="a" style="left:1016px;top:68px;width:0;height:0;border-left:3px solid transparent;border-right:3px solid transparent;border-top:4px solid #fff"></div>
<!-- grips -->
<div class="a" style="left:5px;top:56px;width:2px;height:2px;background:#27418f;box-shadow:0 4px 0 #27418f,0 8px 0 #27418f,0 12px 0 #27418f,1px 1px 0 #fff,1px 5px 0 #fff,1px 9px 0 #fff,1px 13px 0 #fff"></div>
<div class="a" style="left:464px;top:56px;width:2px;height:2px;background:#27418f;box-shadow:0 4px 0 #27418f,0 8px 0 #27418f,0 12px 0 #27418f,1px 1px 0 #fff,1px 5px 0 #fff,1px 9px 0 #fff,1px 13px 0 #fff"></div>
<!-- separators -->
<div class="a" style="left:126px;top:57px;width:1px;height:14px;background:#6a8ccb;box-shadow:1px 0 0 #fff"></div>
<div class="a" style="left:155px;top:57px;width:1px;height:14px;background:#6a8ccb;box-shadow:1px 0 0 #fff"></div>
<div class="a" style="left:184px;top:57px;width:1px;height:14px;background:#6a8ccb;box-shadow:1px 0 0 #fff"></div>
<div class="a" style="left:224px;top:57px;width:1px;height:14px;background:#6a8ccb;box-shadow:1px 0 0 #fff"></div>
<div class="a" style="left:264px;top:57px;width:1px;height:14px;background:#6a8ccb;box-shadow:1px 0 0 #fff"></div>
<div class="a" style="left:373px;top:57px;width:1px;height:14px;background:#6a8ccb;box-shadow:1px 0 0 #fff"></div>
<div class="a" style="left:638px;top:57px;width:1px;height:14px;background:#6a8ccb;box-shadow:1px 0 0 #fff"></div>
<div class="a" style="left:713px;top:57px;width:1px;height:14px;background:#6a8ccb;box-shadow:1px 0 0 #fff"></div>
<div class="a" style="left:811px;top:57px;width:1px;height:14px;background:#6a8ccb;box-shadow:1px 0 0 #fff"></div>
<div class="a" style="left:863px;top:57px;width:1px;height:14px;background:#6a8ccb;box-shadow:1px 0 0 #fff"></div>
<div class="a" style="left:892px;top:57px;width:1px;height:14px;background:#6a8ccb;box-shadow:1px 0 0 #fff"></div>
<!-- new -->
<svg class="a" style="left:13px;top:55px" width="16" height="16"><path d="M2.5 1.5h7l3 3v10h-10z" fill="#fbfbfb" stroke="#5a6a90"/><path d="M9.5 1.5v3h3" fill="#dde" stroke="#5a6a90"/><path d="M3 15h10V5" stroke="#2d3c66" stroke-width="1.2" fill="none"/></svg>
<!-- open -->
<svg class="a" style="left:35px;top:55px" width="17" height="16"><path d="M1 5h5l1 1.5h6V14H1z" fill="#e9b54a" stroke="#8a6a20"/><path d="M1 14l3-6h12l-3 6z" fill="#f9d872" stroke="#9a7424"/><path d="M9 4c1-3 5-3 6 0" stroke="#2d6fd0" stroke-width="1.5" fill="none"/><path d="M13 4h4l-2 2z" fill="#2d6fd0"/></svg>
<!-- save -->
<svg class="a" style="left:59px;top:55px" width="16" height="16"><rect x="1" y="1" width="14" height="14" fill="#5a5fc4" stroke="#3a3a8a"/><rect x="3" y="2" width="10" height="6" fill="#f0f0ff"/><rect x="5" y="10" width="6" height="5" fill="#dde"/><rect x="6" y="11" width="2" height="3" fill="#336"/></svg>
<!-- permission -->
<svg class="a" style="left:82px;top:55px" width="16" height="16"><path d="M2.5 1.5h6l3 3v10h-9z" fill="#fbfbfb" stroke="#5a6a90"/><circle cx="11" cy="11.5" r="4" fill="#d8311a" stroke="#a02010"/><rect x="8.5" y="10.5" width="5" height="2" fill="#fff"/></svg>
<!-- email -->
<svg class="a" style="left:104px;top:55px" width="17" height="17"><path d="M4 7c0-6 10-6 10 0v6H4z" fill="#eef" stroke="#6b7690"/><circle cx="12.5" cy="6.5" r="1.2" fill="#c33"/><rect x="0.5" y="9.5" width="10" height="6" fill="#f4f4f8" stroke="#39506e"/><path d="M2 12h3M6 12h3M2 14h7" stroke="#5a6a90"/></svg>
<!-- print -->
<svg class="a" style="left:133px;top:55px" width="16" height="16"><path d="M4 1h8v5H4z" fill="#fff" stroke="#777"/><path d="M1 7h14v6H1z" fill="#c9ced6" stroke="#4f5a6e"/><rect x="2" y="9" width="12" height="3" fill="#e8eaf0"/><rect x="10" y="9.5" width="3" height="2" fill="#3cb13c"/><path d="M3 13h10v2H3z" fill="#3a4a66"/></svg>
<!-- research -->
<svg class="a" style="left:162px;top:55px" width="17" height="17"><rect x="1" y="2" width="4" height="12" fill="#8b7ad8" stroke="#5a4aa0"/><rect x="5" y="1" width="5" height="13" fill="#e9d98b" stroke="#8a7a3a"/><circle cx="10" cy="10" r="3.5" fill="#dbe8f5" stroke="#6a7a90"/><path d="M12.5 12.5l3 3" stroke="#c88a2a" stroke-width="2"/></svg>
<!-- paste -->
<svg class="a" style="left:191px;top:55px" width="17" height="17"><rect x="1" y="2.5" width="10" height="12" fill="#e6b43c" stroke="#8a6a20"/><rect x="4" y="1" width="4" height="3" fill="#eee" stroke="#666"/><rect x="7.5" y="8.5" width="8" height="7" fill="#f4f4f8" stroke="#39506e"/><path d="M9 11h5M9 13h5" stroke="#8a9ab0"/></svg>
<div class="a" style="left:213px;top:63px;width:0;height:0;border-left:3px solid transparent;border-right:3px solid transparent;border-top:3px solid #000"></div>
<!-- undo -->
<svg class="a" style="left:232px;top:55px" width="15" height="16"><path d="M4 4c4-3 9-1 9 4 0 3-2 5-4 6" stroke="#4b7fd8" stroke-width="2.6" fill="none"/><path d="M1 2v6h6z" fill="#4b7fd8"/></svg>
<div class="a" style="left:253px;top:63px;width:0;height:0;border-left:3px solid transparent;border-right:3px solid transparent;border-top:3px solid #000"></div>
<!-- euro convert -->
<svg class="a" style="left:271px;top:54px" width="17" height="17"><rect x="1" y="1" width="13" height="7" fill="#fff" stroke="#000" stroke-width="1.2"/><ellipse cx="7" cy="4.5" rx="3" ry="2" fill="#000"/><rect x="6" y="6" width="10" height="10" fill="#fff" stroke="#000" stroke-width="1.5"/><text x="8" y="14.5" font-family="Liberation Sans" font-weight="bold" font-size="10" fill="#000">€</text><path d="M1.5 9v5h3" stroke="#2040c0" stroke-width="1.3" fill="none"/></svg>
<!-- hyperlink -->
<svg class="a" style="left:294px;top:54px" width="17" height="17"><circle cx="7" cy="6.5" r="5.5" fill="#3a9a4a"/><path d="M4 3c2 0 4 1 4 3s-3 2-3 4" stroke="#4a8ae0" stroke-width="2.4" fill="none"/><rect x="1.5" y="11" width="7" height="4" rx="2" fill="none" stroke="#8a9ab0" stroke-width="1.6"/><rect x="8" y="11" width="7" height="4" rx="2" fill="none" stroke="#8a9ab0" stroke-width="1.6"/></svg>
<!-- sigma -->
<div class="a" style="left:319px;top:53px;font-family:'Liberation Serif',serif;font-size:17px;font-weight:bold;line-height:20px;color:#000">Σ</div>
<div class="a" style="left:338px;top:63px;width:0;height:0;border-left:3px solid transparent;border-right:3px solid transparent;border-top:3px solid #000"></div>
<!-- sort AZ -->
<div class="a" style="left:350px;top:54px;font-family:'Liberation Serif',serif;font-size:8px;font-weight:bold;line-height:8px;color:#3a5aa8">A</div>
<div class="a" style="left:350px;top:62px;font-family:'Liberation Serif',serif;font-size:8px;font-weight:bold;line-height:8px;color:#a8585a">Z</div>
<svg class="a" style="left:357px;top:54px" width="8" height="17"><path d="M4 1v14M1 11l3 4 3-4" stroke="#000" stroke-width="1.3" fill="none"/></svg>
<!-- chart -->
<svg class="a" style="left:380px;top:55px" width="17" height="16"><path d="M1 15h15" stroke="#667" stroke-width="1.2"/><rect x="2" y="6" width="4" height="9" fill="#5a7ad8" stroke="#335"/><rect x="6" y="2" width="4" height="13" fill="#f0d040" stroke="#553"/><rect x="10" y="4" width="4" height="11" fill="#d8503a" stroke="#533"/></svg>
<!-- help -->
<svg class="a" style="left:403px;top:55px" width="16" height="16"><circle cx="8" cy="8" r="7" fill="#3a78e0" stroke="#1a48a0"/><circle cx="8" cy="8" r="5.5" fill="none" stroke="#fff" stroke-width="0.8" opacity=".7"/><text x="4.6" y="12.5" font-family="Liberation Sans" font-weight="bold" font-size="11" fill="#fff">?</text></svg>
<!-- font box -->
<div class="a" style="left:468px;top:55px;width:127px;height:17px;background:#fff"></div>
<div class="a" style="left:584px;top:56px;width:11px;height:15px;background:#c5d6f3"></div>
<div class="a" style="left:587px;top:63px;width:0;height:0;border-left:3px solid transparent;border-right:3px solid transparent;border-top:3px solid #000"></div>
<div class="m" style="left:471px;top:56px">Arial</div>
<div class="a" style="left:597px;top:55px;width:38px;height:17px;background:#fff"></div>
<div class="a" style="left:623px;top:56px;width:11px;height:15px;background:#c5d6f3"></div>
<div class="a" style="left:626px;top:63px;width:0;height:0;border-left:3px solid transparent;border-right:3px solid transparent;border-top:3px solid #000"></div>
<div class="m" style="left:600px;top:56px">10</div>
<!-- F K U -->
<div class="a" style="left:647px;top:54px;font-family:'Liberation Serif',serif;font-size:14px;font-weight:bold;line-height:18px">F</div>
<div class="a" style="left:670px;top:54px;font-family:'Liberation Serif',serif;font-size:14px;font-weight:bold;font-style:italic;line-height:18px">K</div>
<div class="a" style="left:693px;top:54px;font-family:'Liberation Serif',serif;font-size:14px;font-weight:bold;line-height:18px;text-decoration:underline">U</div>
<!-- align -->
<svg class="a" style="left:721px;top:57px" width="15" height="12"><path d="M0 0.5h14M0 2.5h10M0 4.5h14M0 6.5h10M0 8.5h14M0 10.5h10" stroke="#000" stroke-width="1.1"/></svg>
<svg class="a" style="left:744px;top:57px" width="15" height="12"><path d="M0 0.5h14M2 2.5h10M0 4.5h14M2 6.5h10M0 8.5h14M2 10.5h10" stroke="#000" stroke-width="1.1"/></svg>
<div class="a" style="left:763px;top:52px;width:23px;height:22px;background:linear-gradient(#ffd9a6,#fcc482 60%,#f9b870);border:1px solid #0a246a"></div>
<svg class="a" style="left:767px;top:57px" width="15" height="12"><path d="M0 0.5h14M4 2.5h10M0 4.5h14M4 6.5h10M0 8.5h14M4 10.5h10" stroke="#000" stroke-width="1.1"/></svg>
<!-- merge -->
<svg class="a" style="left:789px;top:55px" width="17" height="16"><rect x="0.5" y="0.5" width="16" height="15" fill="#fff" stroke="#7a8aa0"/><path d="M0 4h17M0 12h17M8.5 0v4M8.5 12v4" stroke="#7a8aa0"/><text x="5.5" y="11" font-family="Liberation Serif" font-weight="bold" font-size="9" fill="#000">a</text><path d="M2 8h3M12 8h3" stroke="#000"/></svg>
<!-- currency -->
<svg class="a" style="left:817px;top:54px" width="18" height="18"><rect x="0.5" y="1.5" width="16" height="8" fill="#3a6ac8" stroke="#1a3a80"/><ellipse cx="8.5" cy="5.5" rx="3" ry="2.5" fill="#aac8f0"/><ellipse cx="13" cy="11" rx="3.5" ry="1.5" fill="#f0b030" stroke="#a07010"/><ellipse cx="13" cy="13.5" rx="3.5" ry="1.5" fill="#f0b030" stroke="#a07010"/><ellipse cx="13" cy="16" rx="3.5" ry="1.5" fill="#f0b030" stroke="#a07010"/><path d="M1 12h5M1 15h5" stroke="#d89030" stroke-width="1.5"/></svg>
<!-- euro -->
<svg class="a" style="left:842px;top:56px" width="15" height="13"><path d="M13.5 2.2A5.2 5.2 0 1 0 13.5 10.3" stroke="#000" stroke-width="2.6" fill="none"/><path d="M0.5 4.8h8M0.5 7.8h8" stroke="#000" stroke-width="1.8"/></svg>
<!-- indent -->
<svg class="a" style="left:870px;top:55px" width="17" height="16"><path d="M8 1.5h8M8 4.5h8M8 7.5h8M8 10.5h8M1 13.5h15" stroke="#000" stroke-width="1.3"/><path d="M5 1v15" stroke="#000" stroke-dasharray="1 1"/><path d="M1 7h3M2 5l-1.5 2 1.5 2" stroke="#4a7ad8" stroke-width="1.5" fill="none"/></svg>
<!-- borders -->
<svg class="a" style="left:900px;top:55px" width="15" height="16"><path d="M1 1h13M1 7.5h13M1 1v13M7.5 1v13M14 1v13" stroke="#555" stroke-dasharray="1 1"/><path d="M0.5 14.5h14" stroke="#000" stroke-width="1.3"/></svg>
<div class="a" style="left:920px;top:63px;width:0;height:0;border-left:3px solid transparent;border-right:3px solid transparent;border-top:3px solid #000"></div>
<!-- fill -->
<svg class="a" style="left:934px;top:54px" width="17" height="18"><path d="M2 7l5-5 6 6-5 5z" fill="#fff" stroke="#333"/><path d="M7 2c0-2 3-2 3 1" stroke="#333" fill="none"/><path d="M13 8c2 1 2 4 1 5" stroke="#3a6ac8" stroke-width="1.6" fill="none"/><rect x="1" y="14" width="15" height="4" fill="#ffff20"/></svg>
<div class="a" style="left:954px;top:63px;width:0;height:0;border-left:3px solid transparent;border-right:3px solid transparent;border-top:3px solid #000"></div>
<!-- font color -->
<div class="a" style="left:969px;top:52px;font-family:'Liberation Serif',serif;font-size:16px;font-weight:bold;line-height:18px;color:#2a3a8a">A</div>
<div class="a" style="left:966px;top:67px;width:17px;height:4px;background:#e8141a"></div>
<div class="a" style="left:988px;top:63px;width:0;height:0;border-left:3px solid transparent;border-right:3px solid transparent;border-top:3px solid #000"></div>

<!-- ===== formula bar ===== -->
<div class="a" style="left:0;top:75px;width:1024px;height:1px;background:#6f93cf"></div>
<div class="a" style="left:0;top:76px;width:1024px;height:16px;background:#fff"></div>
<div class="a" style="left:0;top:76px;width:2px;height:16px;background:#a9c4f2"></div>
<div class="a" style="left:94px;top:76px;width:74px;height:16px;background:#a9c4f2"></div>
<div class="a" style="left:100px;top:83px;width:0;height:0;border-left:4px solid transparent;border-right:4px solid transparent;border-top:4px solid #000"></div>
<div class="t c" style="left:2px;width:92px;top:77px;line-height:16px">E21</div>
<div class="a" style="left:155px;top:75px;font-family:'Liberation Serif',serif;font-style:italic;font-weight:bold;font-size:13px;line-height:17px;letter-spacing:-1px">fx</div>
<div class="t" style="left:175px;top:77px;line-height:16px">100</div>
<!-- ===== vertical scrollbar ===== -->
<div class="a" style="left:1006px;top:94px;width:18px;height:603px;background:#fbfbf6"></div>
<div class="a" style="left:1006px;top:93px;width:16px;height:1px;background:#8e8b7c"></div>
<div class="a" style="left:1007px;top:94px;width:15px;height:6px;background:#eeebdd"></div>
<div class="a" style="left:1006px;top:100px;width:16px;height:1px;background:#000"></div>
<div class="a" style="left:1022px;top:94px;width:1px;height:619px;background:#c4c3b8"></div><div class="a" style="left:1023px;top:94px;width:1px;height:640px;background:#eeede4"></div>
<div class="a" style="left:1008px;top:102px;width:13px;height:14px;border-radius:2px;background:linear-gradient(135deg,#dfe9fe,#b8cdf8);border:1px solid #c8d6f4"></div>
<svg class="a" style="left:1010px;top:105px" width="9" height="7"><path d="M1 5.5l3.5-3.5 3.5 3.5" stroke="#4d6185" stroke-width="2" fill="none"/></svg>
<div class="a" style="left:1008px;top:119px;width:13px;height:528px;border-radius:2px;background:linear-gradient(90deg,#c9d8fb,#b7cbf7 60%,#adc4f4);border:1px solid #b0c6f2"></div>
<div class="a" style="left:1008px;top:682px;width:13px;height:15px;border-radius:2px;background:linear-gradient(135deg,#dfe9fe,#b8cdf8);border:1px solid #c8d6f4"></div>
<svg class="a" style="left:1010px;top:686px" width="9" height="7"><path d="M1 1.5l3.5 3.5 3.5-3.5" stroke="#4d6185" stroke-width="2" fill="none"/></svg>
<!-- ===== tab bar / h-scroll ===== -->
<div class="a" style="left:0;top:697px;width:1024px;height:16px;background:#fcfcf7"></div>
<div class="a" style="left:0;top:697px;width:66px;height:16px;background:#ecead9"></div>
<div class="a" style="left:0;top:697px;width:2px;height:16px;background:#8e8b7c"></div>
<div class="a" style="left:2px;top:697px;width:64px;height:1px;background:#a9a696"></div><div class="a" style="left:65px;top:697px;width:1px;height:16px;background:#a9a696"></div><svg class="a" style="left:4px;top:701px" width="62" height="11" viewBox="0 0 62 11">
 <path d="M1 1v8" stroke="#000" stroke-width="1.5"/><path d="M7 1.5v7l-4.5-3.5z" fill="#000"/>
 <path d="M24 1.5v7l-4.5-3.5z" fill="#000"/>
 <path d="M35 1.5v7l4.5-3.5z" fill="#000"/>
 <path d="M51 1.5v7l4.5-3.5z" fill="#000"/><path d="M56.5 1v8" stroke="#000" stroke-width="1.5"/>
</svg>
<svg class="a" style="left:66px;top:697px" width="50" height="17"><path d="M0 0L7 16H48V0" fill="#fff"/><path d="M0.5 0L7.5 15.5H48" stroke="#000" fill="none"/><path d="M48.5 0v16" stroke="#888"/></svg>
<div class="a" style="left:76px;top:698px;font-size:12px;font-weight:bold;line-height:15px">Tabell</div>
<div class="a" style="left:114px;top:697px;width:1px;height:16px;background:#000"></div><div class="a" style="left:115px;top:697px;width:1px;height:16px;background:#777"></div>
<div class="a" style="left:116px;top:699px;width:14px;height:13px;border-radius:2px;background:linear-gradient(135deg,#dfe9fe,#b8cdf8);border:1px solid #c8d6f4"></div>
<svg class="a" style="left:119px;top:701px" width="7" height="9"><path d="M5.5 1l-3.5 3.5 3.5 3.5" stroke="#4d6185" stroke-width="2" fill="none"/></svg>
<div class="a" style="left:133px;top:699px;width:662px;height:13px;border-radius:2px;background:linear-gradient(#c9d8fb,#b7cbf7 60%,#adc4f4);border:1px solid #b0c6f2"></div>
<svg class="a" style="left:459px;top:701px" width="9" height="9"><path d="M0.5 1v7M2.5 1v7M4.5 1v7M6.5 1v7" stroke="#f4f8ff" stroke-width="1"/><path d="M1.5 2v7M3.5 2v7M5.5 2v7M7.5 2v7" stroke="#8ca6da" stroke-width="1"/></svg>
<div class="a" style="left:985px;top:699px;width:14px;height:13px;border-radius:2px;background:linear-gradient(135deg,#dfe9fe,#b8cdf8);border:1px solid #c8d6f4"></div>
<svg class="a" style="left:989px;top:701px" width="7" height="9"><path d="M1.5 1l3.5 3.5-3.5 3.5" stroke="#4d6185" stroke-width="2" fill="none"/></svg>
<div class="a" style="left:1006px;top:698px;width:2px;height:15px;background:#000"></div>
<div class="a" style="left:1008px;top:697px;width:14px;height:16px;background:#ecead9"></div>
<!-- ===== status bar ===== -->
<div class="a" style="left:0;top:713px;width:1024px;height:21px;background:linear-gradient(#ece9d8 0px,#ece9d8 14px,#e5e2d2 19px,#f6f5ee 20px,#ffffff 21px)"></div>
<div class="m" style="left:5px;top:720px">Bereit</div>
<div class="a" style="left:719px;top:717px;width:35px;height:16px;border:1px solid #cdcabb;border-right-color:#fff;border-bottom-color:#fff"></div>
<div class="a" style="left:754px;top:717px;width:107px;height:16px;border:1px solid #cdcabb;border-right-color:#fff;border-bottom-color:#fff"></div>
<div class="a" style="left:861px;top:717px;width:28px;height:16px;border:1px solid #cdcabb;border-right-color:#fff;border-bottom-color:#fff"></div>
<div class="a" style="left:889px;top:717px;width:39px;height:16px;border:1px solid #cdcabb;border-right-color:#fff;border-bottom-color:#fff"></div>
<div class="a" style="left:928px;top:717px;width:19px;height:16px;border:1px solid #cdcabb;border-right-color:#fff;border-bottom-color:#fff"></div>
<div class="a" style="left:947px;top:717px;width:29px;height:16px;border:1px solid #cdcabb;border-right-color:#fff;border-bottom-color:#fff"></div>
<div class="a" style="left:976px;top:717px;width:25px;height:16px;border:1px solid #cdcabb;border-right-color:#fff;border-bottom-color:#fff"></div>
<div class="a" style="left:1001px;top:717px;width:21px;height:16px;border:1px solid #cdcabb;border-right-color:#fff;border-bottom-color:#fff"></div>
<div class="m" style="left:929px;top:720px">NF</div>
<!-- ===== taskbar ===== -->
<div class="a" style="left:0;top:734px;width:1024px;height:34px;background:linear-gradient(#1f50c2 0px,#1f50c2 1px,#3a82e6 1px,#3377e0 3px,#2d6ad8 5px,#4a8cf0 5px,#4a8cf0 7px,#2a60dc 7px,#2257d7 9px,#2257d7 32px,#1a44b0 34px)"></div>
<div class="a" style="left:0;top:738px;width:97px;height:30px;border-radius:0 9px 9px 0;background:linear-gradient(#3c9c3c 0%,#49b449 15%,#3a9a3a 50%,#2f8a2f 85%,#256f25 100%);box-shadow:inset -2px 0 3px #1f5a1f"></div>
<svg class="a" style="left:10px;top:742px" width="20" height="20" viewBox="0 0 20 20">
 <path d="M2 3c3-1.5 5-1 7.5 0v6.5C7 8.5 5 8 2 9.5z" fill="#f0541e"/>
 <path d="M10.5 3.5c2.5 1 4.5 1.5 7.5 0V10c-3 1.5-5 1-7.5 0z" fill="#6dbb2a"/>
 <path d="M2 10.5c3-1.5 5-1 7.5 0V17C7 16 5 15.5 2 17z" fill="#2a8ee6"/>
 <path d="M10.5 11c2.5 1 4.5 1.5 7.5 0v6.5c-3 1.5-5 1-7.5 0z" fill="#fcc419"/>
</svg>
<div class="a" style="left:35px;top:742px;font-size:18px;letter-spacing:-0.4px;font-weight:bold;font-style:italic;color:#fff;line-height:22px;text-shadow:1px 1px 1px #1a4a1a">Start</div>
<!-- quick launch -->
<div class="a" style="left:109px;top:744px;width:2px;height:2px;background:#1a3c9c;box-shadow:0 3px 0 #1a3c9c,0 6px 0 #1a3c9c,0 9px 0 #1a3c9c,0 12px 0 #1a3c9c,0 15px 0 #1a3c9c"></div>
<svg class="a" style="left:121px;top:744px" width="17" height="17"><path d="M2 3l9-1 2 3-1 10-9 1z" fill="#f4f8ff" stroke="#1a2a60" stroke-width="1"/><path d="M4 7h6M4 10h5M4 13h6" stroke="#5a6aa0"/><path d="M7 11l7-7 2 1-7 7-3 1z" fill="#dfe6f5" stroke="#1a2a60" stroke-width="0.8"/></svg>
<svg class="a" style="left:144px;top:744px" width="17" height="17"><circle cx="8.5" cy="8.5" r="7.8" fill="#e8711a"/><circle cx="9.5" cy="8" r="4.6" fill="#2f5fb0"/><path d="M6 6c1-2 4-2 5 0s0 4-2 4" fill="#3fa0c0"/><path d="M1.5 10c1 4 5 6 9 5-3-1-5-3-5-6 0-2 1-3 2-4-3 0-6 2-6 5z" fill="#f4a020"/></svg>
<svg class="a" style="left:166px;top:744px" width="18" height="18"><path d="M4.5 9.5h9c0-3-2-5-4.5-5S4 6.8 4 10s2.2 5.2 4.8 5.2c2 0 3.4-1 4.2-2.2" stroke="#47a4f0" stroke-width="2.8" fill="none"/><path d="M2.5 15.5c-2-2 3-10 11-13 3-1 3.5 1 1.5 3" stroke="#8ccaf8" stroke-width="1.3" fill="none"/></svg>
<svg class="a" style="left:190px;top:744px" width="17" height="17"><rect x="0.5" y="0.5" width="16" height="16" fill="#fff4dc" stroke="#f2a84a" stroke-width="1.5"/><circle cx="8.5" cy="8.5" r="5" fill="#fdf2d8" stroke="#b88a3a" stroke-width="1.4"/><path d="M8.5 5.5v3.2h2" stroke="#b88a3a" stroke-width="1.2" fill="none"/></svg>
<svg class="a" style="left:212px;top:743px" width="18" height="18"><path d="M2 8l6-5 6 5v9H2z" fill="#f3e8c8" stroke="#fff"/><rect x="4" y="10" width="4" height="4" fill="#c8a050"/><rect x="9" y="12" width="3" height="5" fill="#c8a050"/><circle cx="13" cy="4.5" r="4" fill="#3a70d0" stroke="#fff"/></svg>
<svg class="a" style="left:235px;top:744px" width="17" height="17"><circle cx="8.5" cy="8.5" r="7.5" fill="#e8e8e8"/><circle cx="8.5" cy="8.5" r="6.5" fill="#d02a2a"/><path d="M4 11c3-1 5-4 5-7 1 3 2 5 4 6" stroke="#fff" stroke-width="1.5" fill="none"/></svg>
<svg class="a" style="left:258px;top:745px" width="17" height="15"><rect x="0.5" y="0.5" width="16" height="14" fill="#fff" stroke="#ccc"/><path d="M3 11l8-7M6 11l8-7M3 7h10" stroke="#111" stroke-width="1.6"/></svg>
<div class="a" style="left:287px;top:744px;width:2px;height:2px;background:#1a3c9c;box-shadow:0 3px 0 #1a3c9c,0 6px 0 #1a3c9c,0 9px 0 #1a3c9c,0 12px 0 #1a3c9c,0 15px 0 #1a3c9c"></div>
<!-- task buttons -->
<div class="a" style="left:297px;top:742px;width:158px;height:23px;border-radius:3px;background:linear-gradient(#3c81f3,#3b80f4 80%,#2a62d0);box-shadow:inset 1px 1px 0 #6aa0ff,inset -1px -1px 0 #1c4ab0"></div>
<svg class="a" style="left:305px;top:745px" width="17" height="17"><circle cx="8.5" cy="8.5" r="7.8" fill="#e8711a"/><circle cx="9.5" cy="8" r="4.6" fill="#2f5fb0"/><path d="M6 6c1-2 4-2 5 0s0 4-2 4" fill="#3fa0c0"/><path d="M1.5 10c1 4 5 6 9 5-3-1-5-3-5-6 0-2 1-3 2-4-3 0-6 2-6 5z" fill="#f4a020"/></svg>
<div class="m" style="left:325px;top:748px;color:#fff">news-item (applicatio...</div>
<div class="a" style="left:457px;top:742px;width:158px;height:23px;border-radius:3px;background:linear-gradient(#3c81f3,#3b80f4 80%,#2a62d0);box-shadow:inset 1px 1px 0 #6aa0ff,inset -1px -1px 0 #1c4ab0"></div>
<svg class="a" style="left:465px;top:745px" width="17" height="17"><rect x="0" y="0" width="17" height="17" fill="#eee"/><circle cx="8.5" cy="8.5" r="7.5" fill="#1a3a8a"/><path d="M4 5c3 0 5 2 4 5s3 4 5 2" stroke="#d8a030" stroke-width="2" fill="none"/></svg>
<div class="m" style="left:486px;top:748px;color:#fff">actior SaxoTrader - S...</div>
<div class="a" style="left:616px;top:742px;width:160px;height:23px;border-radius:3px;background:#1e48b8;box-shadow:inset 1px 1px 1px #0f2a80"></div>
<svg class="a" style="left:627px;top:745px" width="17" height="17"><path d="M5.5 2.5h8l2 2v11h-10z" fill="#fff" stroke="#555"/><rect x="0.5" y="1.5" width="9" height="9" fill="#e8f2d8" stroke="#3d7d2a"/><path d="M2 3h2l1 1.5 1-1.5h2l-2 3 2 3h-2l-1-1.5-1 1.5h-2l2-3z" fill="#2f8a2f"/></svg>
<div class="m" style="left:647px;top:748px;color:#fff">ARU-KGV2.xls</div>
<!-- tray -->
<div class="a" style="left:966px;top:734px;width:58px;height:34px;background:linear-gradient(#1a8ef0 0px,#19a0f5 2px,#0f8ae8 6px,#0e8ae6 28px,#0b6fcf 34px);box-shadow:inset 1px 0 0 #1a5fc8"></div>
<div class="a" style="left:958px;top:743px;width:18px;height:18px;border-radius:50%;background:radial-gradient(circle at 40% 35%,#8ac6ff,#2a7ae0 60%,#1a55b8);border:1px solid #fff"></div>
<svg class="a" style="left:962px;top:747px" width="10" height="10"><path d="M6 1.5L2.5 5 6 8.5" stroke="#fff" stroke-width="2.2" fill="none"/></svg>
<div class="m" style="left:983px;top:747px;color:#fff">16:18</div>

</body></html>
